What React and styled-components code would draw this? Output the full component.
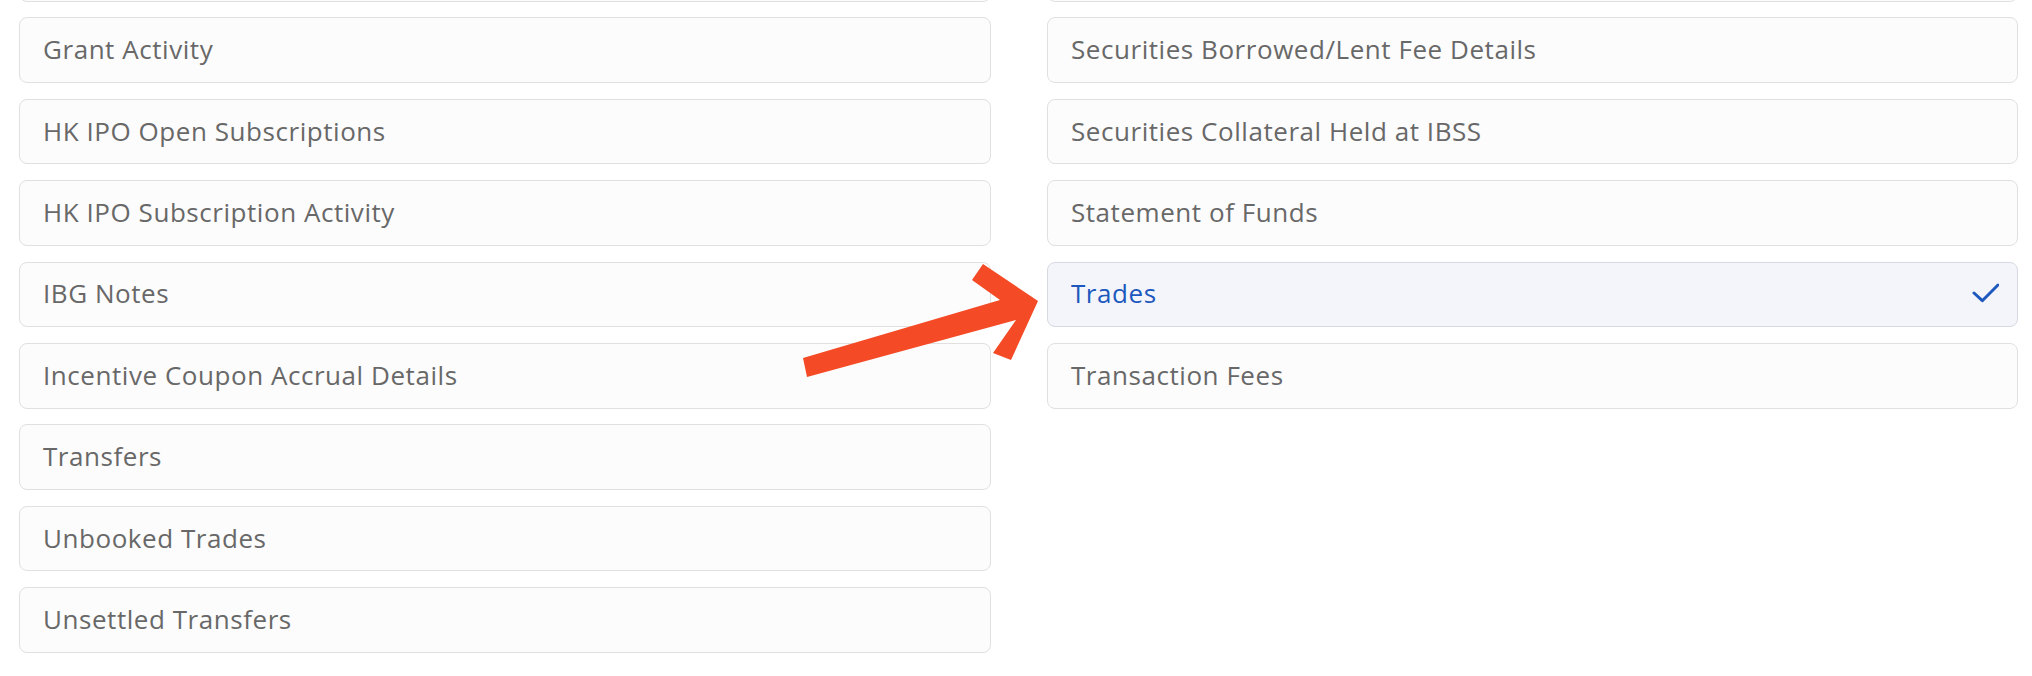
import React from "react";
import styled, { createGlobalStyle } from "styled-components";

const Global = createGlobalStyle`
  html, body { margin: 0; padding: 0; background: #ffffff; }
  body { font-family: "Open Sans", "Liberation Sans", sans-serif; overflow: hidden; }
`;

const Page = styled.div`
  position: relative;
  width: 2032px;
  height: 676px;
  overflow: hidden;
  background: #ffffff;
`;

const Columns = styled.div`
  display: grid;
  grid-template-columns: 972px 971px;
  column-gap: 56px;
  padding-left: 19px;
  margin-top: -64px;
  align-items: start;
`;

const List = styled.div`
  display: flex;
  flex-direction: column;
  gap: 15.8px;
`;

const Option = styled.div`
  box-sizing: border-box;
  height: 65.6px;
  display: flex;
  align-items: center;
  justify-content: space-between;
  padding: 0 18px 2px 23px;
  border-radius: 8px;
  border: 1px solid ${(p) => (p.$selected ? "#d6d9e1" : "#e0e0e0")};
  background: ${(p) => (p.$selected ? "#f4f5fa" : "#fcfcfc")};
  color: ${(p) => (p.$selected ? "#1c58bd" : "#686868")};
  font-size: 26px;
  letter-spacing: 0.55px;
  white-space: nowrap;
`;

const Check = styled.svg`
  width: 28px;
  height: 28px;
  flex: none;
  margin-top: 2px;
`;

const Arrow = styled.svg`
  position: absolute;
  left: 0;
  top: 0;
  pointer-events: none;
`;

const left = [
  "",
  "Grant Activity",
  "HK IPO Open Subscriptions",
  "HK IPO Subscription Activity",
  "IBG Notes",
  "Incentive Coupon Accrual Details",
  "Transfers",
  "Unbooked Trades",
  "Unsettled Transfers",
];

const right = [
  "",
  "Securities Borrowed/Lent Fee Details",
  "Securities Collateral Held at IBSS",
  "Statement of Funds",
  "Trades",
  "Transaction Fees",
];

function Item({ label, selected }) {
  return (
    <Option $selected={selected}>
      <span>{label}</span>
      {selected && (
        <Check viewBox="0 0 28 28">
          <polyline
            points="3,13 11.3,20.7 27,5"
            fill="none"
            stroke="#1c58bd"
            strokeWidth="3"
            strokeLinecap="round"
            strokeLinejoin="round"
          />
        </Check>
      )}
    </Option>
  );
}

export default function App() {
  return (
    <>
      <Global />
      <Page>
        <Columns>
          <List>
            {left.map((l, i) => (
              <Item key={i} label={l} />
            ))}
          </List>
          <List>
            {right.map((l, i) => (
              <Item key={i} label={l} selected={l === "Trades"} />
            ))}
          </List>
        </Columns>
        <Arrow width="2032" height="676" viewBox="0 0 2032 676">
          <polygon
            points="803,358 1000,300 972,280 983,264 1038,301 1011,360 993,353 1016,320 807,377"
            fill="#f44a25"
          />
        </Arrow>
      </Page>
    </>
  );
}
